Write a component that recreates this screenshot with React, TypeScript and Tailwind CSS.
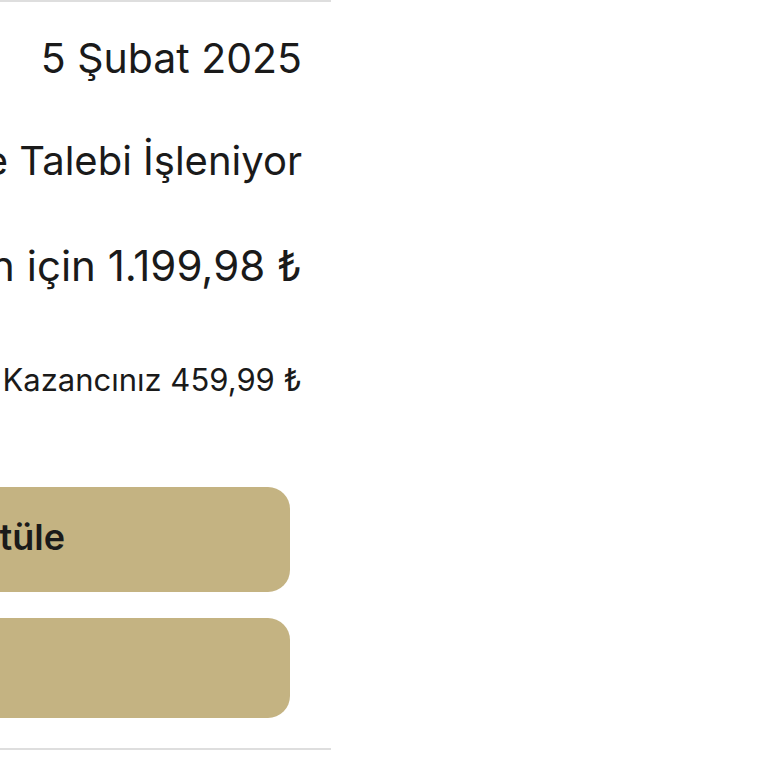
export default function App() {
  return (
    <div className="min-h-screen bg-white" style={{ fontFamily: "Inter, 'Noto Sans', sans-serif" }}>
      <div className="w-[331px] overflow-hidden border-t-2 border-b-2 border-[#dedede] text-[#1a1a1a]">
        <div className="flex flex-col items-end pr-[29px] pt-[36px] pb-[30px]">
          <div className="whitespace-nowrap text-[41px] leading-none">5 Şubat 2025</div>
          <div className="mt-[62px] whitespace-nowrap text-[40px] leading-none">İade Talebi İşleniyor</div>
          <div className="mt-[64px] whitespace-nowrap text-[42px] leading-none">Siparişin için 1.199,98 ₺</div>
          <div className="mt-[77px] whitespace-nowrap text-[31px] leading-none">Toplam Kazancınız 459,99 ₺</div>
          <button className="mt-[92px] mr-[12px] flex h-[105px] w-[700px] shrink-0 items-center justify-end rounded-[22px] bg-[#c4b382] pr-[225px] pb-[5px] text-[36px] font-semibold text-[#1a1a1a]">
            <span className="whitespace-nowrap">Siparişi Görüntüle</span>
          </button>
          <button className="mt-[26px] mr-[12px] flex h-[100px] w-[700px] shrink-0 items-center justify-end rounded-[22px] bg-[#c4b382] pr-[320px] text-[36px] font-semibold text-[#1a1a1a]">
            <span className="whitespace-nowrap">Kapat</span>
          </button>
        </div>
      </div>
    </div>
  );
}
